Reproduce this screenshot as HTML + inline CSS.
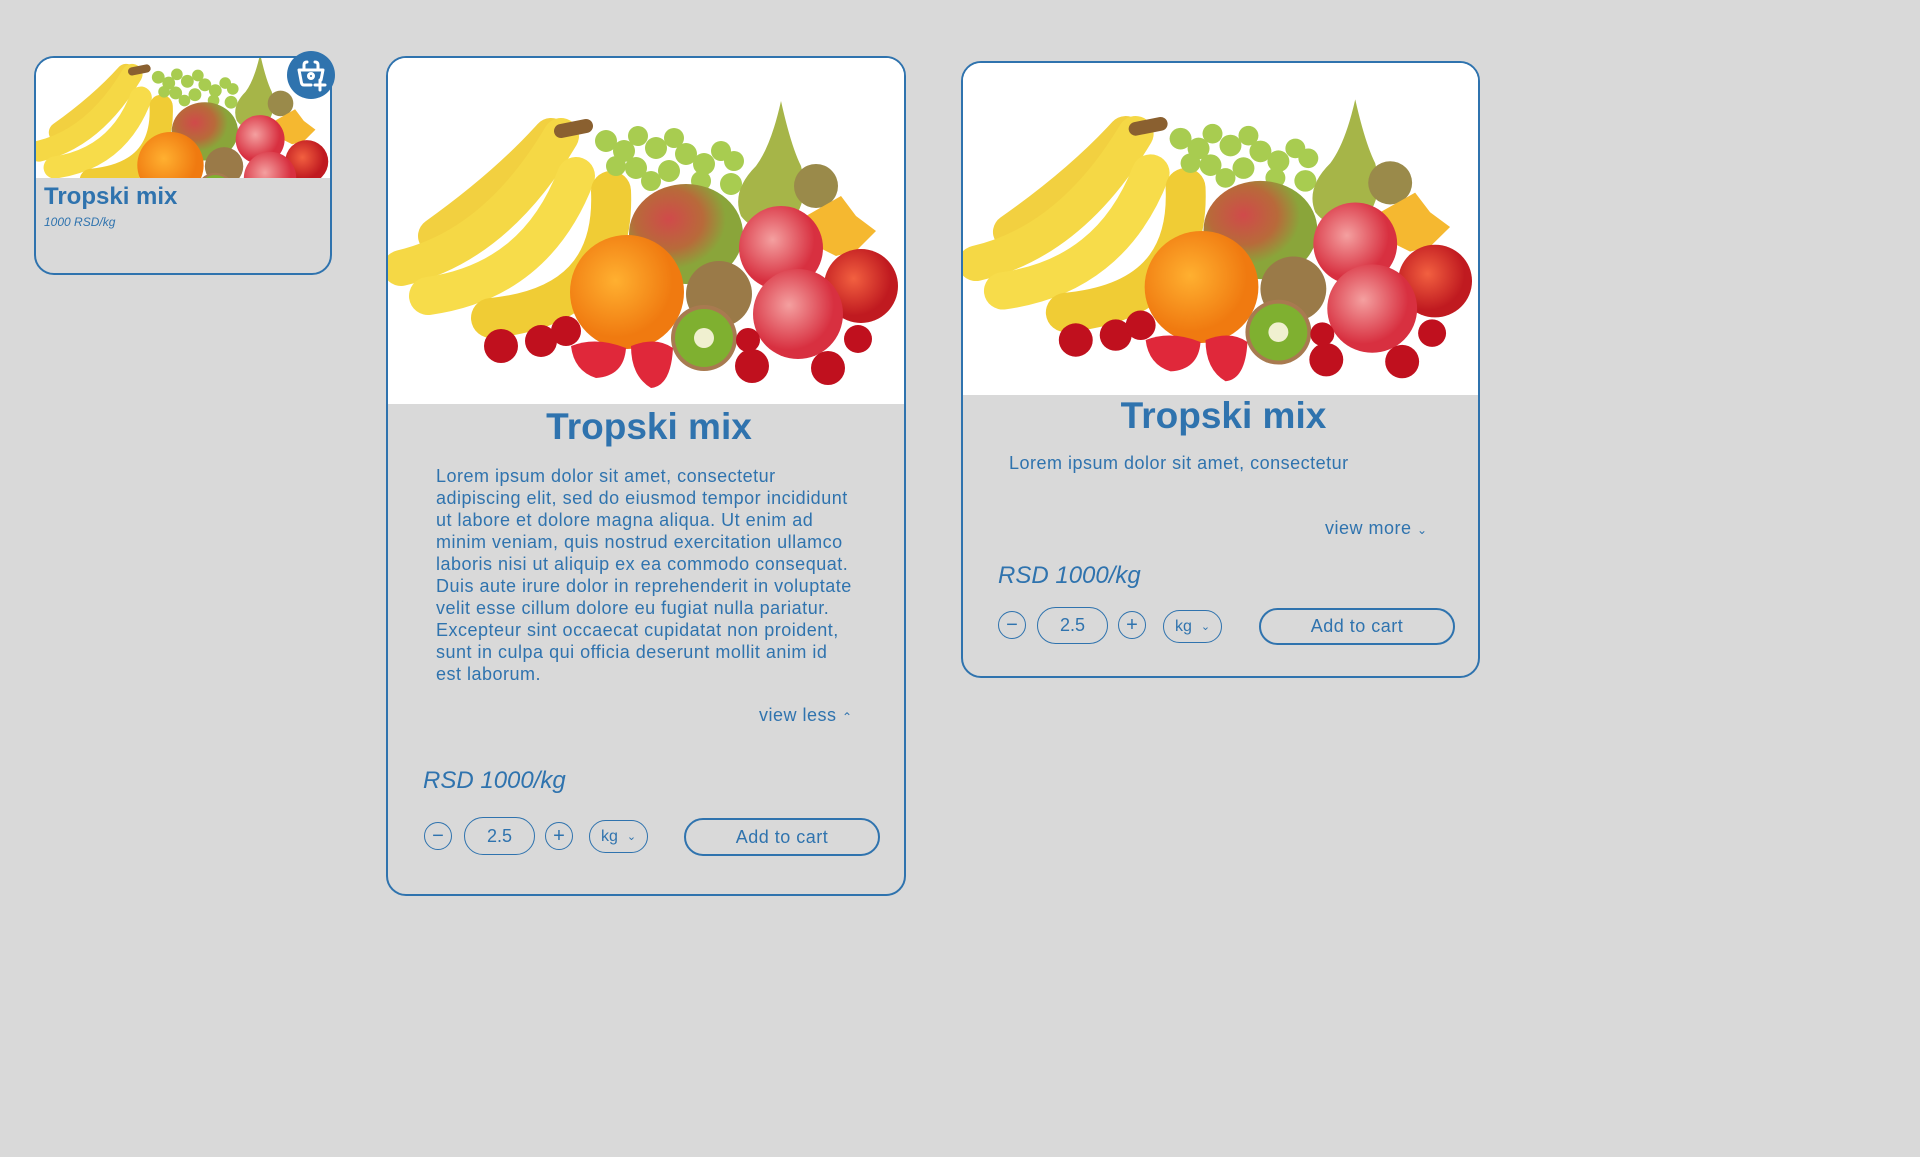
<!DOCTYPE html>
<html><head><meta charset="utf-8">
<style>
*{box-sizing:border-box;margin:0;padding:0}
body{width:1920px;height:1157px;background:#d9d9d9;font-family:"Liberation Sans",sans-serif;color:#2f73ae;position:relative;overflow:hidden}
.card{position:absolute;border:2px solid #2f73ae;border-radius:20px;overflow:hidden;background:#d9d9d9}
.img{position:absolute;left:0;top:0;background:#fff}
.abs{position:absolute;white-space:nowrap}
.sp{letter-spacing:0.5px}
.t{font-weight:bold}
.circ{position:absolute;border:1.5px solid #2f73ae;border-radius:50%;width:28px;height:28px;display:flex;align-items:center;justify-content:center;font-size:20px;line-height:1}
.pill{position:absolute;border:1.5px solid #2f73ae;border-radius:20px;display:flex;align-items:center;justify-content:center;font-size:18px}
.add{position:absolute;border:2.5px solid #2f73ae;border-radius:20px;display:flex;align-items:center;justify-content:center;font-size:18px;letter-spacing:0.5px}
</style></head><body>
<svg width="0" height="0" style="position:absolute">
<defs>
<radialGradient id="mg" cx="35%" cy="35%"><stop offset="0" stop-color="#d04a4a"/><stop offset="0.6" stop-color="#b86a3a"/><stop offset="1" stop-color="#8aa53a"/></radialGradient>
<radialGradient id="og" cx="40%" cy="40%"><stop offset="0" stop-color="#ffb030"/><stop offset="1" stop-color="#f07a10"/></radialGradient>
<radialGradient id="ag" cx="40%" cy="40%"><stop offset="0" stop-color="#f4a0a0"/><stop offset="1" stop-color="#d83040"/></radialGradient>
<radialGradient id="rg" cx="40%" cy="40%"><stop offset="0" stop-color="#f26040"/><stop offset="1" stop-color="#c01a20"/></radialGradient>
<g id="fruit">
<rect x="0" y="0" width="520" height="350" fill="#fff"/>
<g stroke-linecap="round" fill="none">
<path d="M50,180 Q120,130 165,80" stroke="#f2d040" stroke-width="36"/>
<path d="M15,212 Q110,190 175,80" stroke="#f5d845" stroke-width="36"/>
<path d="M42,240 Q150,225 190,120" stroke="#f7dc4a" stroke-width="38"/>
<path d="M105,262 Q230,250 225,135" stroke="#f0cc35" stroke-width="40"/>
<path d="M175,75 L200,70" stroke="#8a6030" stroke-width="14"/>
</g>
<g fill="#a8cc50">
<circle cx="220" cy="85" r="11"/><circle cx="238" cy="95" r="11"/><circle cx="252" cy="80" r="10"/><circle cx="270" cy="92" r="11"/><circle cx="288" cy="82" r="10"/><circle cx="300" cy="98" r="11"/><circle cx="318" cy="108" r="11"/><circle cx="335" cy="95" r="10"/><circle cx="348" cy="105" r="10"/><circle cx="345" cy="128" r="11"/><circle cx="250" cy="112" r="11"/><circle cx="283" cy="115" r="11"/><circle cx="265" cy="125" r="10"/><circle cx="230" cy="110" r="10"/><circle cx="315" cy="125" r="10"/>
</g>
<path d="M395,45 Q405,90 415,110 Q425,150 400,170 Q370,180 355,160 Q345,135 370,110 Q385,90 395,45Z" fill="#a6b548"/>
<circle cx="430" cy="130" r="22" fill="#9a8a4a"/>
<path d="M420,160 L455,140 L470,160 L490,175 L470,195 L450,200 L420,185Z" fill="#f5b830"/>
<ellipse cx="300" cy="178" rx="57" ry="50" fill="url(#mg)"/>
<circle cx="395" cy="192" r="42" fill="url(#ag)"/>
<circle cx="475" cy="230" r="37" fill="url(#rg)"/>
<circle cx="333" cy="238" r="33" fill="#9a7a48"/>
<circle cx="241" cy="236" r="57" fill="url(#og)"/>
<circle cx="412" cy="258" r="45" fill="url(#ag)"/>
<circle cx="318" cy="282" r="33" fill="#a87a50"/>
<circle cx="318" cy="282" r="29" fill="#7fb030"/>
<circle cx="318" cy="282" r="10" fill="#f0f0d0"/>
<path d="M185,290 Q210,280 240,292 Q238,320 210,322 Q188,315 185,290Z" fill="#e0283a"/>
<path d="M245,290 Q270,280 287,292 Q285,330 265,332 Q245,320 245,290Z" fill="#e0283a"/>
<g fill="#c0101e">
<circle cx="115" cy="290" r="17"/><circle cx="155" cy="285" r="16"/><circle cx="180" cy="275" r="15"/><circle cx="366" cy="310" r="17"/><circle cx="442" cy="312" r="17"/><circle cx="472" cy="283" r="14"/><circle cx="362" cy="284" r="12"/>
</g>
</g>
</defs></svg>

<!-- card 1 -->
<div class="card" style="left:34px;top:56px;width:298px;height:219px">
 <svg class="img" width="294" height="120" viewBox="10 50 505 210" preserveAspectRatio="xMidYMid slice"><use href="#fruit"/></svg>
 <div class="abs t" style="left:8px;top:125px;font-size:24px">Tropski mix</div>
 <div class="abs" style="left:8px;top:157px;font-size:12px;font-style:italic">1000 RSD/kg</div>
</div>
<svg style="position:absolute;left:287px;top:51px" width="48" height="48" viewBox="0 0 48 48">
 <circle cx="24" cy="24" r="24" fill="#2f73ae"/>
 <g fill="none" stroke="#fff" stroke-width="3" stroke-linecap="round" stroke-linejoin="round">
  <path d="M17,18 V14 Q17,11 20,11 M31,18 V14 Q31,11 28,11"/>
  <path d="M12,19 H36 L34,29 M24,34 H17 Q15,34 14.5,32 L12,19"/>
  <circle cx="24" cy="25" r="2.5"/>
  <path d="M33,29 V39 M28,34 H38"/>
 </g>
</svg>

<!-- card 2 -->
<div class="card" style="left:386px;top:56px;width:520px;height:840px">
 <svg class="img" width="516" height="346" viewBox="2 2 516 346" preserveAspectRatio="none"><use href="#fruit"/></svg>
 <div class="abs t" style="left:3px;width:516px;text-align:center;top:348px;font-size:37px">Tropski mix</div>
 <div class="abs sp" style="left:48px;top:407px;font-size:18px;line-height:22px">Lorem ipsum dolor sit amet, consectetur<br>adipiscing elit, sed do eiusmod tempor incididunt<br>ut labore et dolore magna aliqua. Ut enim ad<br>minim veniam, quis nostrud exercitation ullamco<br>laboris nisi ut aliquip ex ea commodo consequat.<br>Duis aute irure dolor in reprehenderit in voluptate<br>velit esse cillum dolore eu fugiat nulla pariatur.<br>Excepteur sint occaecat cupidatat non proident,<br>sunt in culpa qui officia deserunt mollit anim id<br>est laborum.</div>
 <div class="abs sp" style="left:371px;top:647px;font-size:18px">view less <span style="font-size:12px">&#8963;</span></div>
 <div class="abs" style="left:35px;top:709px;font-size:24px;font-style:italic">RSD 1000/kg</div>
 <div class="circ" style="left:36px;top:764px">&minus;</div>
 <div class="pill" style="left:76px;top:759px;width:71px;height:38px">2.5</div>
 <div class="circ" style="left:157px;top:764px">+</div>
 <div class="pill" style="left:201px;top:762px;width:59px;height:33px;font-size:16px">kg <span style="font-size:11px;margin-left:9px">&#8964;</span></div>
 <div class="add" style="left:296px;top:760px;width:196px;height:38px">Add to cart</div>
</div>

<!-- card 3 -->
<div class="card" style="left:961px;top:61px;width:519px;height:617px">
 <svg class="img" width="515" height="332" viewBox="2 8 516 338" preserveAspectRatio="none"><use href="#fruit"/></svg>
 <div class="abs t" style="left:3px;width:515px;text-align:center;top:332px;font-size:37px">Tropski mix</div>
 <div class="abs sp" style="left:46px;top:390px;font-size:18px">Lorem ipsum dolor sit amet, consectetur</div>
 <div class="abs sp" style="left:362px;top:455px;font-size:18px">view more <span style="font-size:12px">&#8964;</span></div>
 <div class="abs" style="left:35px;top:499px;font-size:24px;font-style:italic">RSD 1000/kg</div>
 <div class="circ" style="left:35px;top:548px">&minus;</div>
 <div class="pill" style="left:74px;top:544px;width:71px;height:37px">2.5</div>
 <div class="circ" style="left:155px;top:548px">+</div>
 <div class="pill" style="left:200px;top:547px;width:59px;height:33px;font-size:16px">kg <span style="font-size:11px;margin-left:9px">&#8964;</span></div>
 <div class="add" style="left:296px;top:545px;width:196px;height:37px">Add to cart</div>
</div>
</body></html>
